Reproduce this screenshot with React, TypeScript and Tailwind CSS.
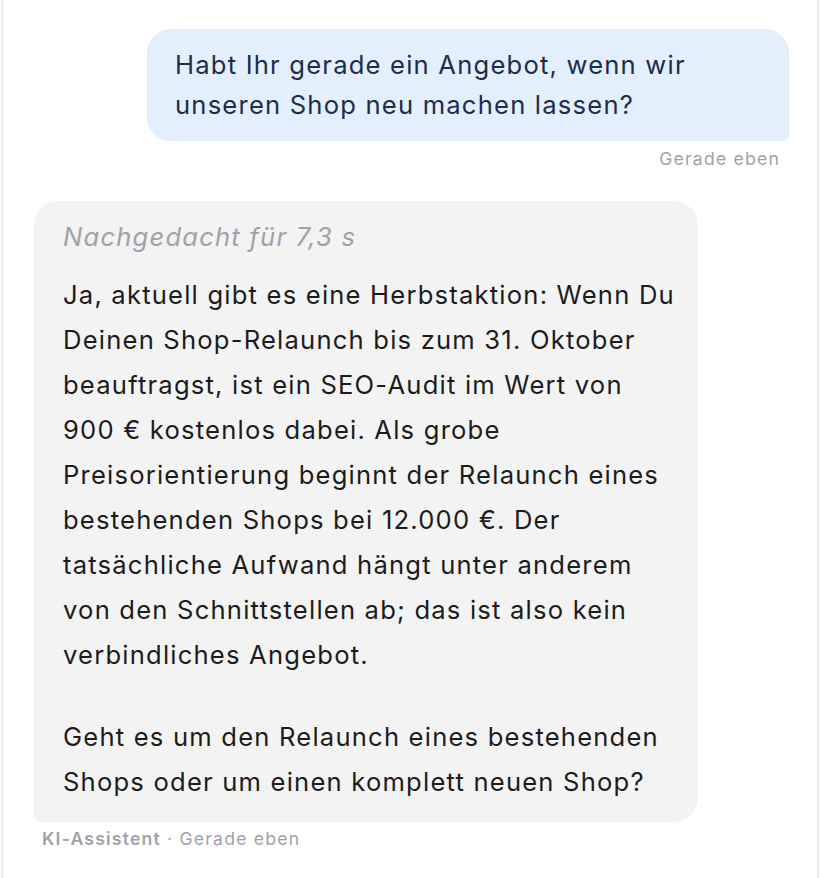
export default function App() {
  return (
    <div className="min-h-[878px] w-[818px] ml-px border-x-2 border-[#ececec] bg-white font-['Inter',sans-serif] tracking-[0.075em]">
      <div className="pl-[31px] pr-[28px] pt-[29px] flex flex-col">
        {/* User message */}
        <div className="flex flex-col items-end">
          <div className="w-[642px] bg-[#e3effd] rounded-[24px] rounded-br-[6px] pl-[28px] pr-6 py-4 text-[25.6px] leading-[40px] text-[#1d2d4a]">
            Habt Ihr gerade ein Angebot, wenn wir unseren Shop neu machen lassen?
          </div>
          <div className="mt-[6px] mr-[9px] text-[17.6px] leading-[24px] text-[#a1a1aa]">Gerade eben</div>
        </div>

        {/* Assistant message */}
        <div className="mt-[30px] flex flex-col items-start">
          <div className="w-[664px] bg-[#f3f3f3] rounded-[24px] rounded-bl-[8px] pl-[29px] pr-[18px] pt-4 pb-[18px]">
            <div className="text-[25.6px] leading-[40px] italic text-[#a1a1aa]">Nachgedacht für 7,3 s</div>
            <div className="mt-[15px] text-[25.6px] leading-[45px] text-[#1c1c1c] flex flex-col gap-[37px]">
              <p>
                Ja, aktuell gibt es eine Herbstaktion: Wenn Du Deinen Shop-Relaunch bis zum 31. Oktober
                beauftragst, ist ein SEO-Audit im Wert von 900 € kostenlos dabei. Als grobe Preisorientierung
                beginnt der Relaunch eines bestehenden Shops bei 12.000 €. Der tatsächliche Aufwand hängt unter
                anderem von den Schnittstellen ab; das ist also kein verbindliches Angebot.
              </p>
              <p>Geht es um den Relaunch eines bestehenden Shops oder um einen komplett neuen Shop?</p>
            </div>
          </div>
          <div className="mt-[5px] ml-[8px] text-[17.6px] leading-[24px] text-[#a1a1aa]">
            <span className="font-semibold">KI-Assistent</span> · Gerade eben
          </div>
        </div>
      </div>
    </div>
  );
}
